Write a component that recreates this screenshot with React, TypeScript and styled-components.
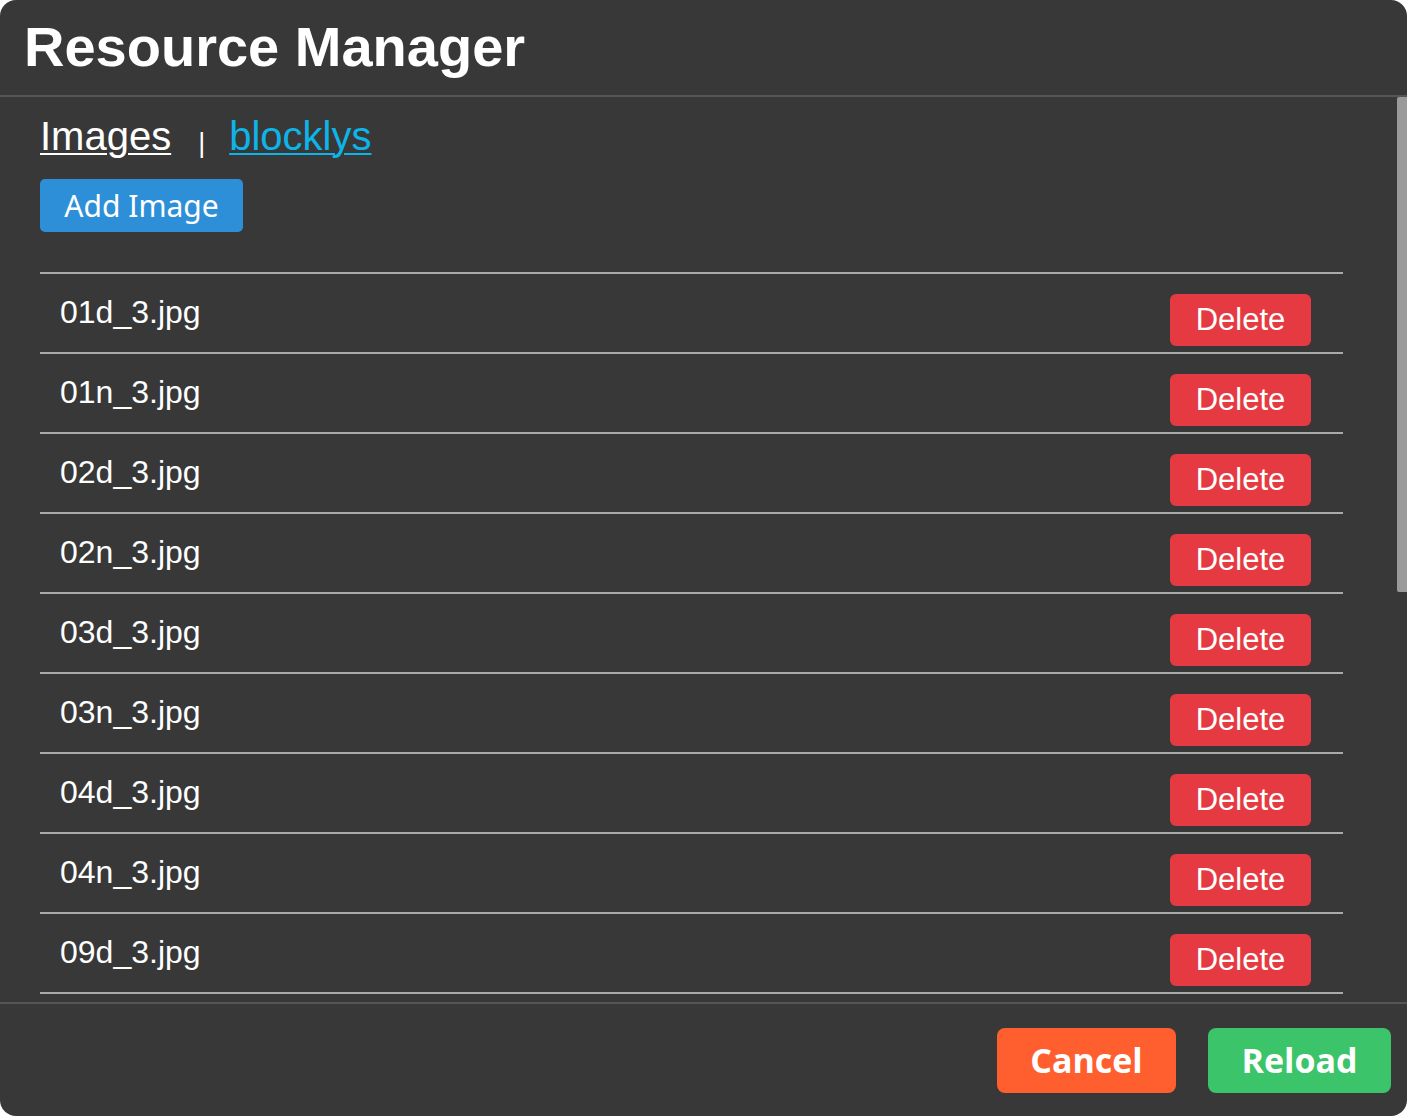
import styled, { createGlobalStyle } from "styled-components";

const files = [
  "01d_3.jpg",
  "01n_3.jpg",
  "02d_3.jpg",
  "02n_3.jpg",
  "03d_3.jpg",
  "03n_3.jpg",
  "04d_3.jpg",
  "04n_3.jpg",
  "09d_3.jpg",
  "09n_3.jpg",
  "10d_3.jpg",
  "10n_3.jpg",
  "11d_3.jpg",
  "11n_3.jpg",
  "13d_3.jpg",
  "13n_3.jpg",
  "50d_3.jpg",
  "50n_3.jpg",
];

export default function App() {
  return (
    <>
      <GlobalStyle />
      <Dialog>
        <Header>
          <Title>Resource Manager</Title>
        </Header>
        <Body>
          <ScrollArea>
            <Tabs>
              <TabLink $active>Images</TabLink>
              <Separator>|</Separator>
              <TabLink>blocklys</TabLink>
            </Tabs>
            <AddButton>Add Image</AddButton>
            <FileList>
              {files.map((name) => (
                <FileRow key={name}>
                  <FileName>{name}</FileName>
                  <DeleteButton>Delete</DeleteButton>
                </FileRow>
              ))}
            </FileList>
          </ScrollArea>
          <ScrollTrack>
            <ScrollThumb />
          </ScrollTrack>
        </Body>
        <Footer>
          <FooterButton color="#ff5f2f" $width={179}>
            Cancel
          </FooterButton>
          <FooterButton color="#3cc46b" $width={183}>
            Reload
          </FooterButton>
        </Footer>
      </Dialog>
    </>
  );
}

const GlobalStyle = createGlobalStyle`
  html, body {
    margin: 0;
    padding: 0;
    background: #ffffff;
  }
  * {
    box-sizing: border-box;
  }
`;

const Dialog = styled.div`
  display: flex;
  flex-direction: column;
  width: 100vw;
  height: 100vh;
  background: #383838;
  border-radius: 16px;
  overflow: hidden;
  color: #ffffff;
  font-family: "Liberation Sans", Arial, sans-serif;
`;

const Header = styled.div`
  flex: none;
  height: 97px;
  padding: 0 24px;
  display: flex;
  align-items: center;
  border-bottom: 2px solid #555555;
`;

const Title = styled.h1`
  margin: 0 0 2px 0;
  font-size: 56px;
  font-weight: 700;
  line-height: 1;
`;

const Body = styled.div`
  flex: 1;
  min-height: 0;
  display: flex;
`;

const ScrollArea = styled.div`
  flex: 1;
  min-width: 0;
  overflow: hidden;
  padding: 17px 54px 0 40px;
`;

const ScrollTrack = styled.div`
  flex: none;
  width: 10px;
`;

const ScrollThumb = styled.div`
  height: 495px;
  background: #9a9a9a;
  border-radius: 2px 0 0 2px;
`;

const Tabs = styled.div`
  display: flex;
  align-items: baseline;
`;

const TabLink = styled.a<{ $active?: boolean }>`
  font-size: 40px;
  color: ${(p) => (p.$active ? "#ffffff" : "#0db4e8")};
  text-decoration: underline;
  text-underline-offset: 3px;
  text-decoration-thickness: 2px;
  cursor: pointer;
`;

const Separator = styled.span`
  align-self: flex-start;
  padding-top: 14px;
  font-size: 27px;
  margin: 0 24px 0 27px;
  color: #ffffff;
`;

const AddButton = styled.button`
  display: block;
  margin: 20px 0 40px 0;
  height: 53px;
  width: 203px;
  padding: 0;
  border: none;
  border-radius: 5px;
  background: #2e8fd9;
  color: #ffffff;
  font-family: "Noto Sans", "Open Sans", sans-serif;
  font-size: 30px;
  cursor: pointer;
`;

const FileList = styled.div`
  border-top: 2px solid #aaaaaa;
`;

const FileRow = styled.div`
  display: flex;
  justify-content: space-between;
  align-items: flex-start;
  height: 80px;
  padding: 20px 32px 0 20px;
  border-bottom: 2px solid #aaaaaa;
`;

const FileName = styled.span`
  font-size: 32px;
  color: #ffffff;
`;

const DeleteButton = styled.button`
  height: 52px;
  width: 141px;
  padding: 0;
  border: none;
  border-radius: 6px;
  background: #e63a42;
  color: #ffffff;
  font-family: "Liberation Sans", Arial, sans-serif;
  font-size: 31px;
  cursor: pointer;
`;

const Footer = styled.div`
  flex: none;
  height: 114px;
  display: flex;
  justify-content: flex-end;
  align-items: center;
  gap: 32px;
  padding: 0 16px 0 0;
  border-top: 2px solid #555555;
`;

const FooterButton = styled.button<{ $width: number }>`
  height: 65px;
  width: ${(p) => p.$width}px;
  padding: 0;
  border: none;
  border-radius: 8px;
  background: ${(p) => p.color};
  color: #ffffff;
  font-family: "Open Sans", "Noto Sans", sans-serif;
  font-weight: 700;
  font-size: 34px;
  cursor: pointer;
`;
